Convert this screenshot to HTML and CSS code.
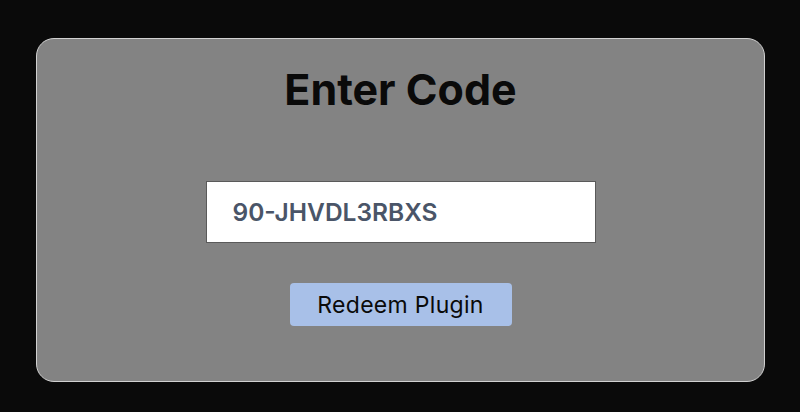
FILE: index.html
```html
<!DOCTYPE html>
<html lang="en">
<head>
    <meta charset="UTF-8">
    <meta name="viewport" content="width=device-width, initial-scale=1.0">
    <title>Enter Code</title>
    <link rel="stylesheet" href="styles.css">
</head>
<body>
    <div class="redeem-card">
        <h1 class="redeem-title">Enter Code</h1>
        <input class="code-input" type="text" value="90-JHVDL3RBXS">
        <button class="redeem-btn">Redeem Plugin</button>
    </div>
</body>
</html>
```

FILE: styles.css
```css
body {
    font-family: Inter, "Noto Sans", sans-serif;
    margin: 0;
    padding: 38px 35px 29px 36px;
    background-color: #0a0a0a;
}

.redeem-card {
    display: flex;
    flex-direction: column;
    align-items: center;
    height: 344px;
    box-sizing: border-box;
    background-color: #838383;
    border: 1px solid #d0d0d0;
    border-radius: 18px;
}

.redeem-title {
    margin: 24px 0 0;
    font-size: 43px;
    font-weight: 700;
    line-height: 52px;
    color: #0a0a0a;
}

.code-input {
    margin-top: 66px;
    width: 390px;
    height: 62px;
    box-sizing: border-box;
    padding: 0 26px;
    border: 1px solid #5a5a5a;
    background-color: #ffffff;
    font-family: Inter, "Noto Sans", sans-serif;
    font-size: 24.5px;
    font-weight: 600;
    color: #4a5568;
    outline: none;
}

.redeem-btn {
    margin-top: 40px;
    width: 222px;
    height: 43px;
    border: none;
    border-radius: 4px;
    background-color: #a8c0e8;
    font-family: Inter, "Noto Sans", sans-serif;
    font-size: 23px;
    letter-spacing: 0.3px;
    color: #0a0a0a;
    cursor: pointer;
}
```
